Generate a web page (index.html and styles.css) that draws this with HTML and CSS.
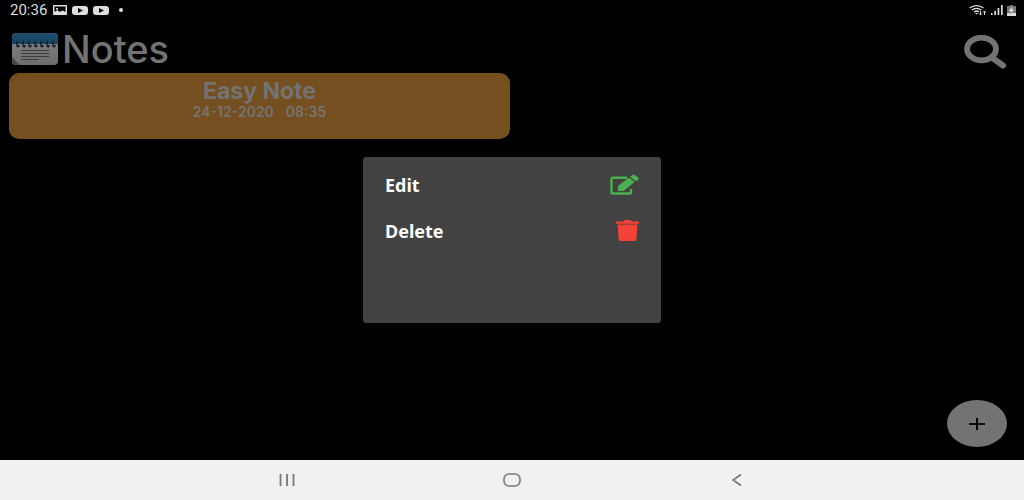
FILE: index.html
```html
<!DOCTYPE html>
<html lang="en">
<head>
<meta charset="utf-8">
<meta name="viewport" content="width=device-width, initial-scale=1">
<title>Notes</title>
<link rel="stylesheet" href="styles.css">
</head>
<body>
<div class="status">
  <div class="status-left">
    <span class="clock">20:36</span>
    <svg width="14" height="10" viewBox="0 0 14 10"><path fill="#ddd" fill-rule="evenodd" d="M1 0h12q1 0 1 1v8q0 1-1 1H1q-1 0-1-1V1q0-1 1-1zM1.500 1.500V7l3-2 2 2 3-1.500 3 1.500V1.500z"/><path fill="#ddd" d="M3 3h2v1.500H3z"/></svg>
    <svg width="16" height="9" viewBox="0 0 16 9"><rect width="16" height="9" rx="3" fill="#ddd"/><path d="M6 2l5 2.500-5 2.500z"/></svg>
    <svg width="16" height="9" viewBox="0 0 16 9"><rect width="16" height="9" rx="3" fill="#ddd"/><path d="M6 2l5 2.500-5 2.500z"/></svg>
    <span class="dot"></span>
  </div>
  <div class="status-right">
    <svg width="18" height="11" viewBox="0 0 18 11" fill="none" stroke="#ddd"><path stroke-width="1.300" d="M.6 3Q7.500-1.700 14.500 3M2.800 5Q7.500 1.600 12.300 5M5 7Q7.500 5 10 7"/><path fill="#ddd" stroke="none" d="M6 8h3L7.500 9.600z"/><path d="M11.500 6v4M10 8.500l1.500 1.500L13 8.500M15.500 10V6M14 7.500L15.500 6 17 7.500"/></svg>
    <svg width="12" height="10" viewBox="0 0 12 10" fill="#ddd"><path d="M0 8h1.500v2H0zM3.300 6h1.700v4H3.300zM6.600 3h1.700v7H6.600zM10 0h1.700v10H10z"/></svg>
    <svg width="9" height="11" viewBox="0 0 9 11"><path fill="#777" d="M3 0h3v1h3v7H0V1h3z"/><path fill="#ddd" d="M0 8h9v3H0zM5.500 1.500L1.500 6h2.300L3 9l4.500-4.500H5z"/></svg>
  </div>
</div>
<main class="app">
  <header class="bar">
    <svg class="logo" width="46" height="33" viewBox="0 0 46 33">
      <defs><linearGradient id="blue" x2="0" y2="1"><stop stop-color="#204e70"/><stop offset="1" stop-color="#164363"/></linearGradient><linearGradient id="paper" x2="0" y2="1"><stop stop-color="#818385"/><stop offset="1" stop-color="#6d6d6d"/></linearGradient></defs>
      <rect width="46" height="32" rx="4" fill="url(#paper)"/>
      <path d="M0 11V4q0-4 4-4h38q4 0 4 4v7z" fill="url(#blue)"/>
      <path d="M0 24l8 8H4q-4 0-4-4z" fill="#48494a"/><path d="M1 24q5 0 7 8z" fill="#777"/>
      <g fill="none" stroke="#171b1f" stroke-width="1.500"><path d="M5 8v5q2 2 2-1M11 8v5q2 2 2-1M17 8v5q2 2 2-1M23 8v5q2 2 2-1M29 8v5q2 2 2-1M35 8v5q2 2 2-1M41 8v5q2 2 2-1"/></g>
      <path d="M9 17.500h28M9 20.500h28M9 23.500h28M9 26.500h18" stroke="#3c3d3f"/>
    </svg>
    <h1 class="title">Notes</h1>
    <button class="search" type="button" aria-label="Search"><svg width="44" height="35" viewBox="0 0 44 35" fill="none" stroke="#737373"><ellipse cx="17.500" cy="14" rx="14.500" ry="11.300" stroke-width="5.800"/><path d="M28.500 23l10.500 7.500" stroke-width="6" stroke-linecap="round"/></svg></button>
  </header>
  <section class="notes">
    <article class="note">
      <h2 class="note-title">Easy Note</h2>
      <p class="note-date"><span>24-12-2020</span><span>08:35</span></p>
    </article>
  </section>
  <button class="add" type="button" aria-label="Add note"><svg width="16" height="12" viewBox="0 0 16 12" stroke="#000"><path d="M0 6h16" stroke-width="1.700"/><path d="M8 0v12" stroke-width="2"/></svg></button>
  <div class="overlay">
    <div class="dialog" role="dialog" aria-label="Note actions">
      <button class="action" type="button"><span>Edit</span>
        <svg width="30" height="22" viewBox="0 0 30 22"><path d="M18 3.800H4q-1.500 0-1.500 1.500V18q0 1.500 1.500 1.500H20.500q1.500 0 1.500-1.500V15" fill="none" stroke="#4caf50" stroke-width="2.400"/><path fill="#4caf50" d="M9 17v-5L20 3.500l5.500 4.500L14.500 17zM21 2.700L23.400 1q1.200-.8 2.400 0L29.300 3.800q1 .9 0 1.800L26.500 7.300z"/></svg></button>
      <button class="action" type="button"><span>Delete</span>
        <svg width="23" height="22" viewBox="0 0 22 22" preserveAspectRatio="none" fill="#f44336"><path d="M0 2.500q0-1 1-1h6L8 0h6l1 1.500h6q1 0 1 1v1.200H0zM1.500 4.500h19l-1 15q0 1.500-2 1.500H4.500q-2 0-2-1.500z"/></svg></button>
    </div>
  </div>
</main>
<nav class="nav">
  <button type="button" aria-label="Recent apps"><svg width="16" height="14" viewBox="0 0 16 14" stroke="#777" stroke-width="1.800"><path d="M1.500 1v12M8 1v12M14.500 1v12"/></svg></button>
  <button type="button" aria-label="Home"><svg width="18" height="14" viewBox="0 0 18 14"><rect x="1" y="1" width="16" height="12" rx="5" fill="none" stroke="#777" stroke-width="1.600"/></svg></button>
  <button type="button" aria-label="Back"><svg width="10" height="14" viewBox="0 0 10 14" fill="none" stroke="#777" stroke-width="1.700"><path d="M9 1.500L1 7l8 5.500"/></svg></button>
</nav>
</body>
</html>
```
FILE: styles.css
```css
* { box-sizing: border-box; }
body {
  margin: 0;
  min-height: 100vh;
  display: flex;
  flex-direction: column;
  background: #000;
  color: #737373;
  font-family: Roboto, "Liberation Sans", sans-serif;
}
h1, h2, p { margin: 0; }
svg { display: block; }
button {
  padding: 0;
  border: 0;
  background: none;
  color: inherit;
  font: inherit;
  cursor: pointer;
}
.status {
  height: 20px;
  padding: 0 8px 0 10px;
  display: flex;
  justify-content: space-between;
  align-items: center;
  color: #ddd;
}
.status-left { display: flex; align-items: center; gap: 5px; }
.status-right { display: flex; align-items: center; gap: 4px; }
.clock { margin-right: 1px; font-size: 15px; line-height: 20px; }
.dot { width: 4px; height: 4px; margin-left: 5px; border-radius: 50%; background: #ddd; }
.app { flex: 1; position: relative; }
.bar {
  height: 53px;
  padding: 5px 16px 0 12px;
  display: flex;
  align-items: center;
}
.title {
  margin-left: 4px;
  flex: 1;
  font-family: Inter, Roboto, sans-serif;
  font-size: 38px;
  line-height: 46px;
  font-weight: 500;
}
.search { margin-top: 6px; }
.notes {
  padding: 0 9px;
  display: grid;
  grid-template-columns: 1fr 1fr;
  gap: 4px;
}
.note {
  min-height: 66px;
  padding: 5px 0;
  border-radius: 10px;
  background: #754f1f;
  text-align: center;
}
.note-title { font-family: Inter, Roboto, sans-serif; font-size: 23px; line-height: 26px; font-weight: 700; }
.note-date {
  display: flex;
  justify-content: center;
  gap: 12px;
  font-family: Inter, Roboto, sans-serif;
  font-size: 14px;
  line-height: 15px;
  font-weight: 600;
}
.add {
  position: absolute;
  right: 17px;
  bottom: 13px;
  width: 60px;
  height: 47px;
  display: grid;
  place-items: center;
  border-radius: 50%;
  background: #737373;
}
.overlay {
  position: absolute;
  inset: 0;
  display: grid;
  place-items: center;
}
.dialog {
  width: 298px;
  min-height: 166px;
  padding: 5px 22px;
  border-radius: 3px;
  background: #424242;
}
.action {
  width: 100%;
  height: 46px;
  display: flex;
  justify-content: space-between;
  align-items: center;
  color: #fff;
  font-family: "Noto Sans", "Open Sans", sans-serif;
  font-size: 18px;
  line-height: 24px;
  font-weight: 700;
}
.nav {
  height: 40px;
  padding: 0 17%;
  display: grid;
  grid-template-columns: 1fr 1fr 1fr;
  background: #f1f1f1;
}
.nav button { display: grid; place-items: center; }
```
